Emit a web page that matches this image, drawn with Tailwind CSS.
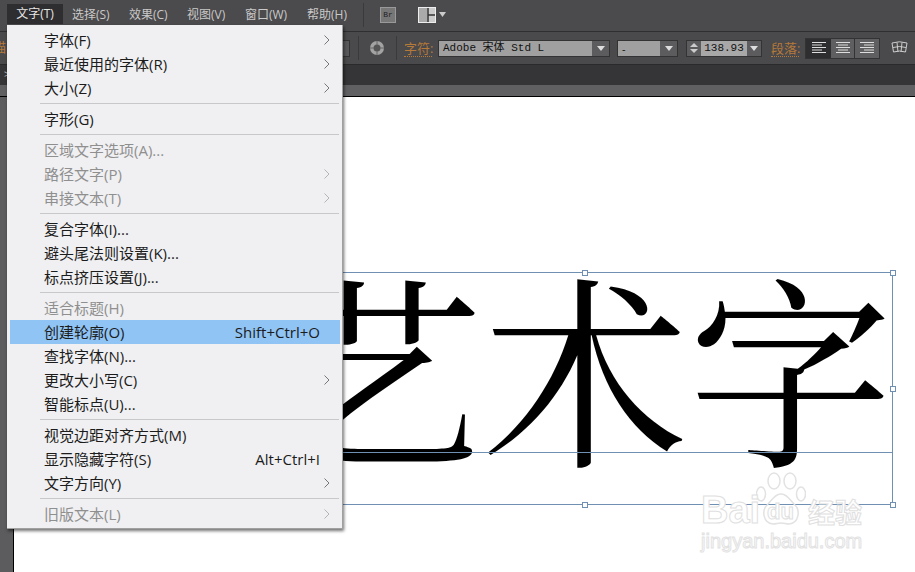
<!DOCTYPE html>
<html lang="zh-CN">
<head>
  <meta charset="UTF-8">
  <title>文字菜单</title>
  <script src="https://cdn.jsdelivr.net/npm/@tailwindcss/browser@4"></script>
</head>
<body class="w-[915px] h-[572px] overflow-hidden bg-white font-['Open_Sans','Noto_Sans_CJK_SC',sans-serif]">
  <div class="relative w-[915px] h-[572px] flex flex-col overflow-hidden">
    <!-- menu bar -->
    <div class="h-[32px] shrink-0 bg-[#4b4a4c] border-b border-[#2f2e30] flex items-center pb-[2px] text-[12px] text-[#c9c9c9]">
      <span class="ml-[7px] w-[56px] h-[20px] bg-[#2e2d2f] text-[#e6e6e6] flex items-center justify-center mt-[-1px]">文字(T)</span>
      <span class="ml-[9px] w-[57px]">选择(S)</span>
      <span class="w-[58px]">效果(C)</span>
      <span class="w-[58px]">视图(V)</span>
      <span class="w-[62px]">窗口(W)</span>
      <span class="w-[56px]">帮助(H)</span>
      <span class="w-px h-[24px] bg-[#3a393b]"></span>
      <span class="ml-[16px] w-[16px] h-[16px] bg-[#777] border border-[#999] text-[8px] text-[#222] flex items-center justify-center font-['Liberation_Mono',monospace]">Br</span>
      <svg class="ml-[22px]" width="30" height="16" viewBox="0 0 30 16">
        <rect x="0.5" y="0.5" width="17" height="15" fill="#ccc" stroke="#eee"/>
        <path d="M1 1h8v14H1z" fill="#aaa"/>
        <path d="M10 1v14M10 8h7" stroke="#333" stroke-width="1.5"/>
        <path d="M21 5h7l-3.500 5z" fill="#ccc"/>
      </svg>
    </div>
    <!-- control bar -->
    <div class="h-[33px] shrink-0 bg-[#4a494b] border-b border-[#2a2a2b] flex items-center text-[13px]">
      <div class="w-[343px] shrink-0 text-[#b5793a] -ml-[7px]">描</div>
      <div class="ml-[7px] w-[7px] h-[17px] bg-[#58575a] border border-[#333] border-l-0"></div>
      <span class="ml-[8px] w-px h-[24px] bg-[#3a393b]"></span>
      <svg class="ml-[10px]" width="16" height="16" viewBox="0 0 16 16">
        <circle cx="8" cy="8" r="7" fill="#a3a3a3"/>
        <circle cx="8" cy="8" r="3.500" fill="#555"/>
        <path d="M8 1v4M8 11v4M1 8h4M11 8h4" stroke="#666"/>
      </svg>
      <span class="ml-[11px] w-px h-[24px] bg-[#3a393b]"></span>
      <span class="ml-[7px] w-[28px] whitespace-nowrap text-[#b5793a] border-b border-dotted border-[#b5793a] leading-[16px]">字符:</span>
      <div class="ml-[6px] w-[172px] h-[17px] bg-[#a0a0a0] border border-[#333] flex text-[#111] font-['Liberation_Mono','Noto_Sans_CJK_SC',monospace] text-[11px] leading-[15px]">
        <span class="flex-1 pl-[4px] whitespace-pre">Adobe 宋体 Std L</span>
        <span class="w-[17px] bg-[#5c5b5e] flex items-center justify-center"><span class="w-0 h-0 border-x-[4px] border-x-transparent border-t-[5px] border-t-[#ddd]"></span></span>
      </div>
      <div class="ml-[7px] w-[61px] h-[17px] bg-[#a0a0a0] border border-[#333] flex text-[#111] text-[11px] leading-[15px]">
        <span class="flex-1 pl-[4px]">-</span>
        <span class="w-[17px] bg-[#5c5b5e] flex items-center justify-center"><span class="w-0 h-0 border-x-[4px] border-x-transparent border-t-[5px] border-t-[#ddd]"></span></span>
      </div>
      <div class="ml-[8px] w-[76px] h-[17px] flex border border-[#333] bg-[#a8a8a8] text-[#111] leading-[15px] font-['Liberation_Mono',monospace]">
        <span class="w-[14px] bg-[#5c5b5e] flex flex-col items-center justify-center gap-[2px]">
          <span class="w-0 h-0 border-x-[4px] border-x-transparent border-b-[4px] border-b-[#ccc]"></span>
          <span class="w-0 h-0 border-x-[4px] border-x-transparent border-t-[4px] border-t-[#ccc]"></span>
        </span>
        <span class="flex-1 text-center text-[11px]">138.93</span>
        <span class="w-[14px] bg-[#5c5b5e] flex items-center justify-center"><span class="w-0 h-0 border-x-[4px] border-x-transparent border-t-[5px] border-t-[#ddd]"></span></span>
      </div>
      <span class="ml-[9px] w-[28px] whitespace-nowrap text-[#b5793a] border-b border-dotted border-[#b5793a] leading-[16px]">段落:</span>
      <div class="ml-[6px] h-[21px] flex border border-[#333]">
        <span class="w-[25px] bg-[#2e2d2f] flex items-center justify-center">
          <svg width="14" height="12" viewBox="0 0 14 12"><path d="M0 .5h14M0 3h10M0 5.500h14M0 8h10M0 10.500h14" stroke="#ddd"/></svg>
        </span>
        <span class="w-[24px] bg-[#5f5e61] flex items-center justify-center border-r border-[#333]">
          <svg width="14" height="12" viewBox="0 0 14 12"><path d="M0 .5h14M2 3h10M0 5.500h14M2 8h10M0 10.500h14" stroke="#ddd"/></svg>
        </span>
        <span class="w-[24px] bg-[#5f5e61] flex items-center justify-center">
          <svg width="14" height="12" viewBox="0 0 14 12"><path d="M0 .5h14M4 3h10M0 5.500h14M4 8h10M0 10.500h14" stroke="#ddd"/></svg>
        </span>
      </div>
      <svg class="ml-[11px]" width="17" height="14" viewBox="0 0 17 14" fill="none" stroke="#ccc">
        <path d="M1 2q7.500-2.500 15 0l-1.500 9q-6-2-12 0zM6 1.500l1 9.500M11 1.500l-1 9.500M2 6.500q6.500-2 13 0"/>
      </svg>
    </div>
    <!-- tab strip -->
    <div class="h-[20px] shrink-0 bg-[#353436] text-[#bbb] text-[10px] leading-[18px] pl-[4px]">&gt;</div>
    <div class="h-[12px] shrink-0 bg-[#605f61] border-b border-black"></div>
    <!-- workspace -->
    <div class="flex-1 flex">
      <div class="w-[14px] bg-[#5c5b5d] border-r border-black"></div>
      <div class="flex-1 bg-white"></div>
    </div>

    <!-- artwork on the canvas -->
    <div class="absolute left-[277px] top-[272px] w-[616px] h-[233px] border border-[#6f8fb3]">
      <div class="absolute left-0 top-[-60px] w-[615px] text-center whitespace-nowrap text-[205px] leading-[300px] text-black font-['Noto_Serif_CJK_SC','Noto_Sans_CJK_SC',serif]">艺术字</div>
      <div class="absolute left-0 right-0 top-[179px] h-px bg-[#6f8fb3]"></div>
      <span class="absolute left-[304px] top-[-3px] w-[6px] h-[6px] bg-white border border-[#6f8fb3]"></span>
      <span class="absolute right-[-4px] top-[-3px] w-[6px] h-[6px] bg-white border border-[#6f8fb3]"></span>
      <span class="absolute right-[-4px] top-[113px] w-[6px] h-[6px] bg-white border border-[#6f8fb3]"></span>
      <span class="absolute right-[-4px] bottom-[-4px] w-[6px] h-[6px] bg-white border border-[#6f8fb3]"></span>
      <span class="absolute left-[304px] bottom-[-4px] w-[6px] h-[6px] bg-white border border-[#6f8fb3]"></span>
    </div>

    <!-- watermark -->
    <div class="absolute left-[700px] top-[470px] w-[170px] h-[85px]">
      <svg class="absolute left-[56px] top-[2px]" width="50" height="56" viewBox="0 0 50 56" fill="none" stroke="#e2e2e2" stroke-width="1.500">
        <ellipse cx="18" cy="9" rx="6" ry="8"/>
        <ellipse cx="34" cy="9" rx="6" ry="8"/>
        <ellipse cx="5" cy="22" rx="4.500" ry="7"/>
        <ellipse cx="45" cy="22" rx="4.500" ry="7"/>
        <path d="M25 22c-6 0-8 5-13 10-7 6-5 19 5 20 3 0 5-1 8-1s5 1 8 1c10-1 12-14 5-20-5-5-7-10-13-10z"/>
      </svg>
      <div class="absolute left-[1px] top-[18px] text-[38px] leading-[44px] font-bold text-white [-webkit-text-stroke:1px_#e0e0e0] font-['Liberation_Sans',sans-serif]">Bai</div>
      <div class="absolute left-[67px] top-[28px] text-[22px] leading-[28px] font-bold text-white [-webkit-text-stroke:1px_#e0e0e0] font-['Liberation_Sans',sans-serif]">du</div>
      <div class="absolute left-[108px] top-[26px] text-[27px] leading-[32px] font-bold text-white [-webkit-text-stroke:1px_#e0e0e0] font-['Noto_Sans_CJK_SC',sans-serif]">经验</div>
      <div class="absolute left-[1px] top-[58px] text-[20px] leading-[26px] text-white [-webkit-text-stroke:1px_#e2e2e2] whitespace-nowrap font-['Liberation_Sans',sans-serif]">jingyan.baidu.com</div>
    </div>

    <!-- type menu -->
    <div class="absolute left-[7px] top-[25px] w-[336px] h-[504px] bg-[#f0f0f2] border-r border-b border-[#a0a0a0] shadow-[1px_2px_3px_rgba(0,0,0,0.55)] pt-[3px] text-[15px] leading-[24px] text-[#1c1c1c]">
      <div class="h-[24px] pl-[37px] pr-[12px] flex justify-between"><span>字体(F)</span><svg class="mt-[7px]" width="6" height="10" viewBox="0 0 6 10" fill="none" stroke="#777"><path d="M.5.5 5 5 .5 9.500"/></svg></div>
      <div class="h-[24px] pl-[37px] pr-[12px] flex justify-between"><span>最近使用的字体(R)</span><svg class="mt-[7px]" width="6" height="10" viewBox="0 0 6 10" fill="none" stroke="#777"><path d="M.5.5 5 5 .5 9.500"/></svg></div>
      <div class="h-[24px] pl-[37px] pr-[12px] flex justify-between"><span>大小(Z)</span><svg class="mt-[7px]" width="6" height="10" viewBox="0 0 6 10" fill="none" stroke="#777"><path d="M.5.5 5 5 .5 9.500"/></svg></div>
      <div class="h-[7px] pl-[33px] pr-[3px] pt-[3px]"><div class="h-px bg-[#c8c8ca]"></div></div>
      <div class="h-[24px] pl-[37px]">字形(G)</div>
      <div class="h-[7px] pl-[33px] pr-[3px] pt-[3px]"><div class="h-px bg-[#c8c8ca]"></div></div>
      <div class="text-[#8f8f8f]">
        <div class="h-[24px] pl-[37px]">区域文字选项(A)...</div>
        <div class="h-[24px] pl-[37px] pr-[12px] flex justify-between"><span>路径文字(P)</span><svg class="mt-[7px]" width="6" height="10" viewBox="0 0 6 10" fill="none" stroke="#b5b5b5"><path d="M.5.5 5 5 .5 9.500"/></svg></div>
        <div class="h-[24px] pl-[37px] pr-[12px] flex justify-between"><span>串接文本(T)</span><svg class="mt-[7px]" width="6" height="10" viewBox="0 0 6 10" fill="none" stroke="#b5b5b5"><path d="M.5.5 5 5 .5 9.500"/></svg></div>
      </div>
      <div class="h-[7px] pl-[33px] pr-[3px] pt-[3px]"><div class="h-px bg-[#c8c8ca]"></div></div>
      <div class="h-[24px] pl-[37px]">复合字体(I)...</div>
      <div class="h-[24px] pl-[37px]">避头尾法则设置(K)...</div>
      <div class="h-[24px] pl-[37px]">标点挤压设置(J)...</div>
      <div class="h-[7px] pl-[33px] pr-[3px] pt-[3px]"><div class="h-px bg-[#c8c8ca]"></div></div>
      <div class="h-[24px] pl-[37px] text-[#8f8f8f]">适合标题(H)</div>
      <div class="h-[24px] ml-[3px] mr-[2px] pl-[34px] pr-[20px] flex justify-between bg-[#90c4f5]"><span>创建轮廓(O)</span><span>Shift+Ctrl+O</span></div>
      <div class="h-[24px] pl-[37px]">查找字体(N)...</div>
      <div class="h-[24px] pl-[37px] pr-[12px] flex justify-between"><span>更改大小写(C)</span><svg class="mt-[7px]" width="6" height="10" viewBox="0 0 6 10" fill="none" stroke="#777"><path d="M.5.5 5 5 .5 9.500"/></svg></div>
      <div class="h-[24px] pl-[37px]">智能标点(U)...</div>
      <div class="h-[7px] pl-[33px] pr-[3px] pt-[3px]"><div class="h-px bg-[#c8c8ca]"></div></div>
      <div class="h-[24px] pl-[37px]">视觉边距对齐方式(M)</div>
      <div class="h-[24px] pl-[37px] pr-[22px] flex justify-between"><span>显示隐藏字符(S)</span><span>Alt+Ctrl+I</span></div>
      <div class="h-[24px] pl-[37px] pr-[12px] flex justify-between"><span>文字方向(Y)</span><svg class="mt-[7px]" width="6" height="10" viewBox="0 0 6 10" fill="none" stroke="#777"><path d="M.5.5 5 5 .5 9.500"/></svg></div>
      <div class="h-[7px] pl-[33px] pr-[3px] pt-[3px]"><div class="h-px bg-[#c8c8ca]"></div></div>
      <div class="h-[24px] pl-[37px] pr-[12px] flex justify-between text-[#8f8f8f]"><span>旧版文本(L)</span><svg class="mt-[7px]" width="6" height="10" viewBox="0 0 6 10" fill="none" stroke="#b5b5b5"><path d="M.5.5 5 5 .5 9.500"/></svg></div>
    </div>
  </div>
</body>
</html>
